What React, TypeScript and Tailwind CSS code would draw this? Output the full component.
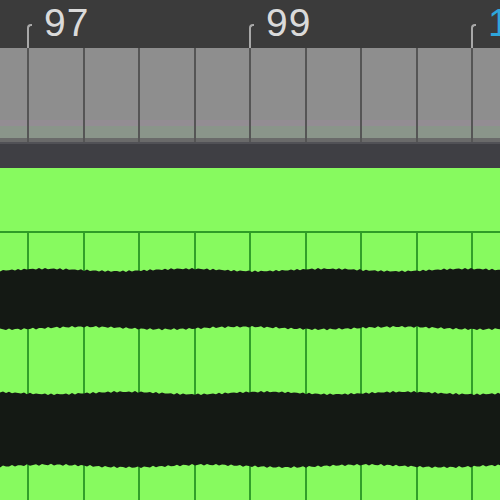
import React from 'react';

const GRID_X = [28, 83.5, 139, 194.5, 250, 305.5, 361, 416.5, 472];

const jagged = (top: number, bottom: number, seed: number) => {
  const xs: number[] = [];
  for (let x = -6; x <= 506; x += 3) xs.push(x);
  const upper = xs.map((x) => {
    const j = Math.sin(x * 0.9 + seed) * 0.8 + Math.sin(x * 0.045 + seed * 2) * 1.2;
    return `${x},${(top + j).toFixed(1)}`;
  });
  const lower = [...xs].reverse().map((x) => {
    const j = Math.sin(x * 0.8 + seed * 3) * 0.9 + Math.sin(x * 0.04 + seed) * 1.3;
    return `${x},${(bottom + j).toFixed(1)}`;
  });
  return [...upper, ...lower].join(' ');
};

const RulerMark: React.FC<{ x: number; label: string; active?: boolean }> = ({ x, label, active }) => (
  <div className="absolute top-0 flex items-start" style={{ left: x }}>
    <div className="mt-[24px] w-[5px] h-[24px] border-l-2 border-t-2 border-[#a8a8a8] rounded-tl-[4px]" />
    <span
      className={`ml-[12px] mt-[1px] text-[39px] leading-[44px] tracking-[1px] ${active ? 'text-[#2ea6dc]' : 'text-[#dadada]'}`}
      style={{ fontFamily: '"Liberation Sans", Arial, sans-serif' }}
    >
      {label}
    </span>
  </div>
);

const GridLines: React.FC<{ color: string }> = ({ color }) => (
  <>
    {GRID_X.map((x) => (
      <div key={x} className={`absolute top-0 bottom-0 w-[2px] ${color}`} style={{ left: x - 1 }} />
    ))}
  </>
);

export default function App() {
  return (
    <div className="w-[500px] h-[500px] overflow-hidden flex flex-col bg-[#3b3b3b]">
      {/* ruler */}
      <div className="relative h-[48px] shrink-0 bg-[#3b3b3b]">
        <RulerMark x={27} label="97" />
        <RulerMark x={249} label="99" />
        <RulerMark x={471} label="101" active />
      </div>

      {/* region header (gray) */}
      <div className="relative h-[94px] shrink-0 bg-[#8e8e8e] overflow-hidden">
        <div className="absolute left-0 right-0 top-[72px] h-[6px] bg-[#938d93]" />
        <div className="absolute left-0 right-0 top-[78px] h-[12px] bg-[#8a958a]" />
        <div className="absolute left-0 right-0 bottom-0 h-[4px] bg-[#6a6a6a]" />
        <GridLines color="bg-[#555555]" />
      </div>

      {/* dark strip */}
      <div className="h-[26px] shrink-0 bg-[#3f3f44] border-t-2 border-[#515156]" />

      {/* green region */}
      <div className="flex-1 flex flex-col bg-[#87fa5f]">
        <div className="h-[63px] shrink-0" />
        <div className="h-[2px] shrink-0 bg-[#2e9c27]" />
        <div className="relative flex-1">
          <GridLines color="bg-[#32a02a]" />
          <svg className="absolute inset-0" width="500" height="266" viewBox="0 0 500 266">
            <polygon points={jagged(37, 95, 1.3)} fill="#141914" />
            <polygon points={jagged(160, 233, 2.7)} fill="#141914" />
          </svg>
        </div>
      </div>
    </div>
  );
}
